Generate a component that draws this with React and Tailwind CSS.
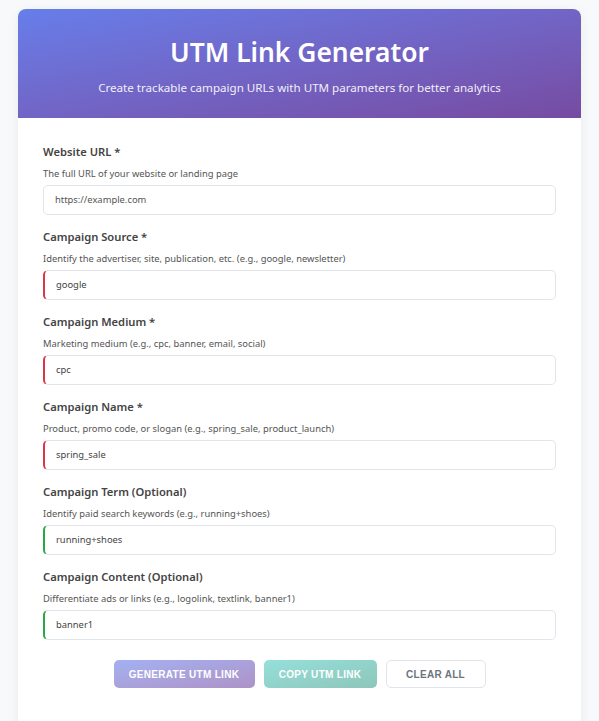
import React from "react";

const fields = [
  { label: "Website URL *", desc: "The full URL of your website or landing page", value: "", placeholder: "https://example.com", accent: "" },
  { label: "Campaign Source *", desc: "Identify the advertiser, site, publication, etc. (e.g., google, newsletter)", value: "google", accent: "border-l-[#dc3545]" },
  { label: "Campaign Medium *", desc: "Marketing medium (e.g., cpc, banner, email, social)", value: "cpc", accent: "border-l-[#dc3545]" },
  { label: "Campaign Name *", desc: "Product, promo code, or slogan (e.g., spring_sale, product_launch)", value: "spring_sale", accent: "border-l-[#dc3545]" },
  { label: "Campaign Term (Optional)", desc: "Identify paid search keywords (e.g., running+shoes)", value: "running+shoes", accent: "border-l-[#28a745]" },
  { label: "Campaign Content (Optional)", desc: "Differentiate ads or links (e.g., logolink, textlink, banner1)", value: "banner1", accent: "border-l-[#28a745]" },
];

export default function App() {
  return (
    <div className="min-h-[721px] bg-[#f8f9fb] px-[18px] pt-[9px] font-['Noto_Sans',sans-serif]">
      <div className="bg-white rounded-[8px] shadow-[0_2px_12px_rgba(0,0,0,0.06)] overflow-hidden">
        <div className="h-[109px] bg-gradient-to-br from-[#667eea] to-[#764ba2] flex flex-col items-center text-white">
          <h1 className="mt-[25px] text-[26.4px] leading-[36px] font-semibold">UTM Link Generator</h1>
          <p className="mt-[10px] text-[11.6px] leading-[16px] opacity-90">Create trackable campaign URLs with UTM parameters for better analytics</p>
        </div>
        <div className="px-[25px] pt-[24px] pb-[60px]">
          {fields.map((f) => (
            <div key={f.label} className="mb-[12px]">
              <div className="text-[11.2px] leading-[20px] font-semibold text-[#444]">{f.label}</div>
              <div className="mt-[5px] text-[9.4px] leading-[14px] text-[#555]">{f.desc}</div>
              <div
                className={`mt-[4px] h-[30px] rounded-[5px] border border-[#e1e4ea] flex items-center px-[11px] text-[9.4px] ${f.accent ? "border-l-[2px] " + f.accent : ""} ${f.value ? "text-[#444]" : "text-[#555]"}`}
              >
                {f.value || f.placeholder}
              </div>
            </div>
          ))}
          <div className="mt-[20px] flex justify-center gap-[9px] font-['Liberation_Sans',sans-serif]">
            <button className="h-[28px] w-[141px] rounded-[5px] bg-gradient-to-br from-[#667eea] to-[#764ba2] opacity-60 text-white text-[10px] font-bold tracking-[0.3px]">GENERATE UTM LINK</button>
            <button className="h-[28px] w-[113px] rounded-[5px] bg-gradient-to-br from-[#4ecdc4] to-[#44a08d] opacity-60 text-white text-[10px] font-bold tracking-[0.3px]">COPY UTM LINK</button>
            <button className="h-[28px] w-[100px] rounded-[5px] bg-white border border-[#e1e4ea] text-[#6c757d] text-[10px] font-bold tracking-[0.3px]">CLEAR ALL</button>
          </div>
        </div>
      </div>
    </div>
  );
}
